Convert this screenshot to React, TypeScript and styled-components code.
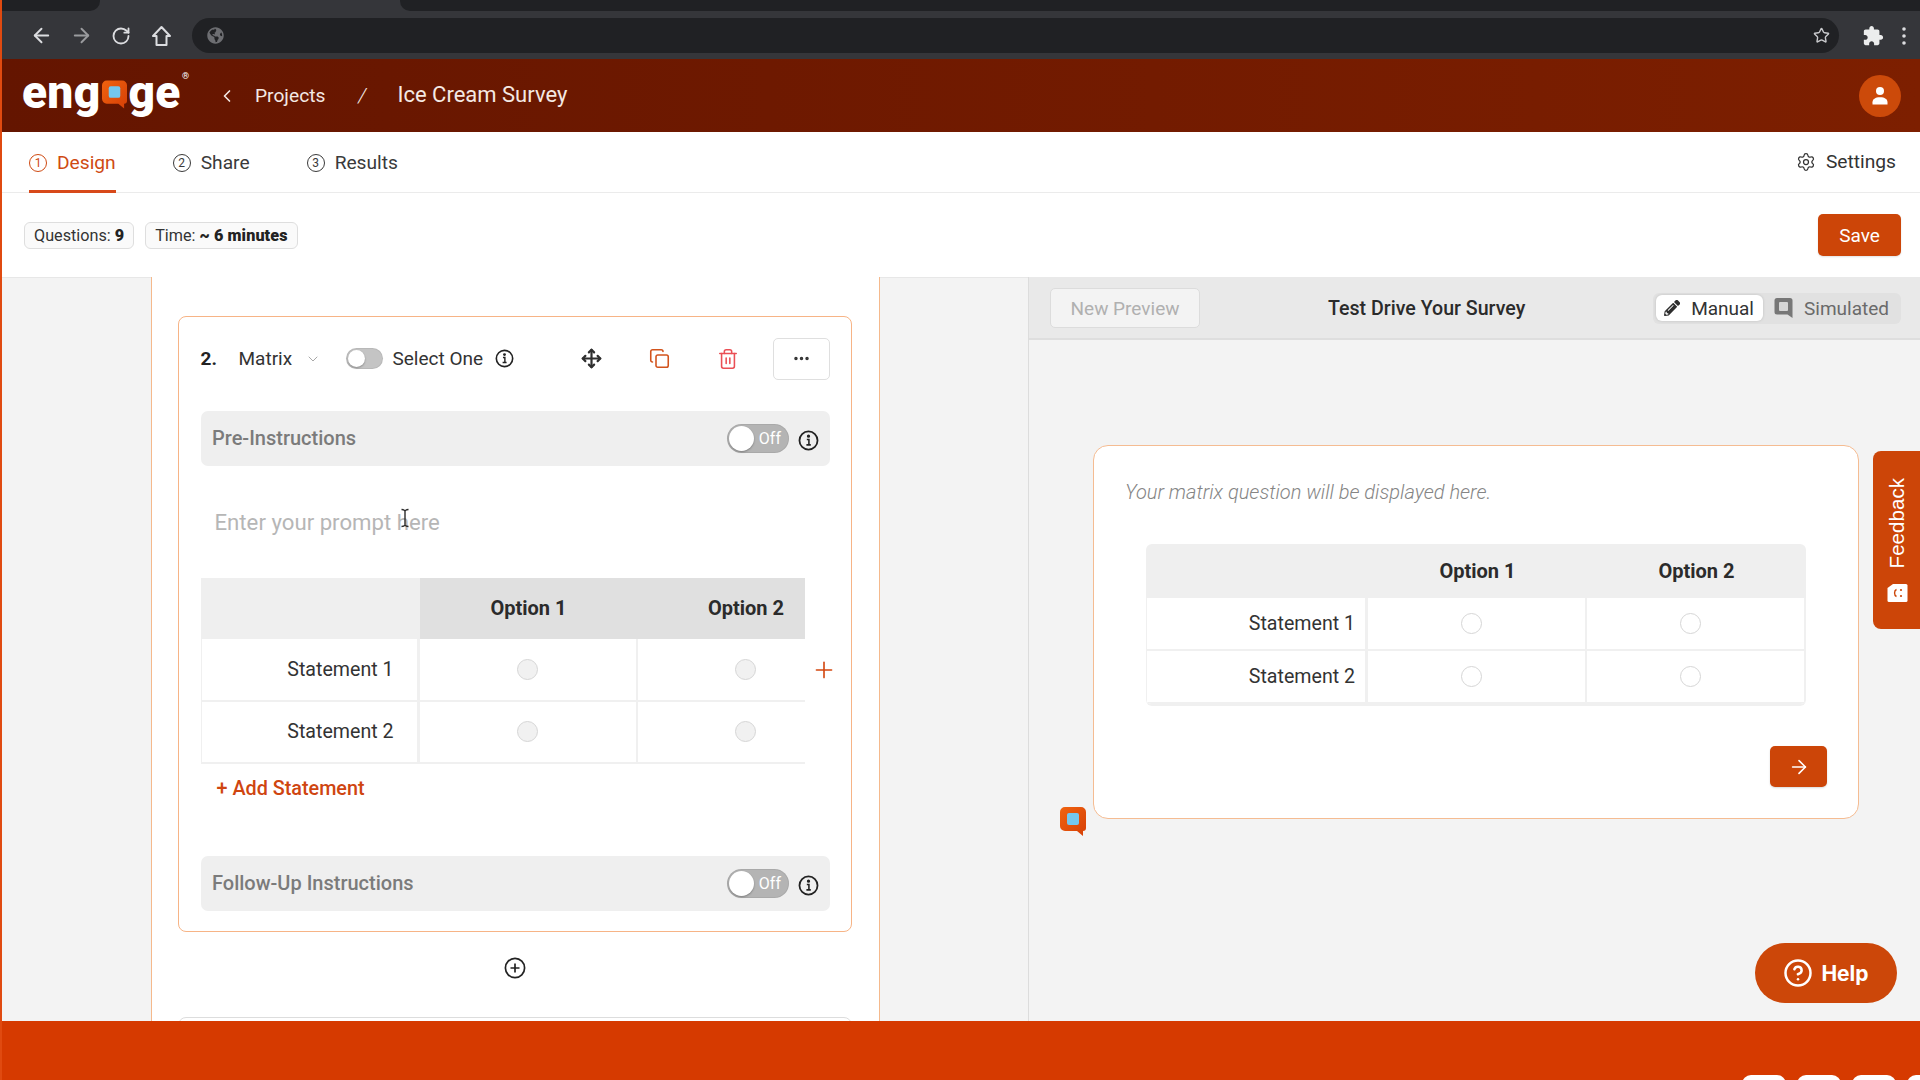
import React from "react";
import styled, { createGlobalStyle } from "styled-components";
import { ArrowLeft, ArrowRight, ChevronDown, ChevronLeft, CircleHelp, Copy, Ellipsis, Move, Plus, RotateCw, Settings, Star, Trash2 } from "lucide-react";
import { FaGlobeAmericas, FaPencilAlt } from "react-icons/fa";

const Global = createGlobalStyle`
  html, body { margin: 0; padding: 0; width: 1920px; height: 1080px; overflow: hidden; background: #fff; }
  body { font-family: Roboto, "Liberation Sans", sans-serif; color: #2b2b2b; }
  * { box-sizing: border-box; }
`;

const Page = styled.div`
  position: relative; width: 1920px; height: 1080px; display: flex; flex-direction: column;
  overflow: hidden; border-left: 2px solid #e04a10;
`;

/* browser chrome */
const ChromeBar = styled.div`height: 59px; background: #35363a; display: flex; flex-direction: column; flex: none;`;
const TabStrip = styled.div`height: 11px; display: flex; gap: 300px;`;
const DarkTab = styled.div<{ $grow?: boolean; $side: "l" | "r" }>`
  background: #202124; width: ${p => (p.$grow ? "auto" : "98px")}; flex: ${p => (p.$grow ? 1 : "none")};
  border-bottom-${p => (p.$side === "l" ? "left" : "right")}-radius: 10px;
`;
const Toolbar = styled.div`height: 48px; display: flex; align-items: center; padding: 1px 0 0 19px;`;
const ChromeBtn = styled.div<{ $dim?: boolean; $w?: number; $ml?: number }>`
  width: ${p => p.$w ?? 40}px; margin-left: ${p => p.$ml ?? 0}px; display: flex; justify-content: center; align-items: center;
  color: ${p => (p.$dim ? "#9a9b9e" : "#dcdde0")};
`;
const Omnibox = styled.div`
  width: 1647px; height: 35px; margin-left: 11px; background: #202124; border-radius: 18px;
  display: flex; align-items: center; justify-content: space-between; padding: 0 9px 0 15px; color: #6d6e72;
`;
const StarIcon = styled(Star)`color: #c8c9cc;`;

/* app header */
const Header = styled.header`
  height: 73px; flex: none; display: flex; align-items: center; padding: 0 19px 0 20px; color: #f4e9e4;
  background: linear-gradient(90deg, #641500 0%, #7d1f00 100%);
`;
const Logo = styled.div`
  width: 168px; display: flex; align-items: center; position: relative; color: #fff;
  font-family: Roboto, sans-serif; font-weight: 900; font-size: 46px; line-height: 1;
  letter-spacing: 0.3px; height: 44px; padding-bottom: 8px;
`;
const LogoBubble = styled.svg`width: 25px; height: 29px; margin: 6px 1px 0 2px; flex: none;`;
const Registered = styled.span`
  position: absolute; top: -2px; right: 1px; font-size: 9px; font-weight: 400; letter-spacing: 0;
`;
const BackChevron = styled(ChevronLeft)`margin-left: 27px; color: #f4e9e4;`;
const Crumb = styled.span`font-size: 19.2px; margin-left: 18px;`;
const Slash = styled.span`font-size: 21px; font-style: italic; margin-left: 33px; font-weight: 300;`;
const Current = styled.span`font-size: 22px; margin-left: 31px; padding-bottom: 2px;`;
const Avatar = styled.div`
  margin-left: auto; width: 42px; height: 42px; border-radius: 50%; background: #cc4a0a;
  display: flex; align-items: center; justify-content: center;
`;

/* tabs */
const TabRow = styled.nav`
  height: 61px; flex: none; display: flex; align-items: stretch; padding: 0 24px 0 27px; border-bottom: 1px solid #ebebeb;
`;
const Tab = styled.div<{ $active?: boolean }>`
  display: flex; align-items: center; gap: 10px; font-size: 19.2px; margin-right: 57px; margin-bottom: -1px; padding-top: 3px;
  color: ${p => (p.$active ? "#cf4a12" : "#3a3a3a")};
  border-bottom: 3px solid ${p => (p.$active ? "#d8491a" : "transparent")};
`;
const StepNo = styled.span`
  width: 18px; height: 18px; border: 1.4px solid currentColor; border-radius: 50%; font-size: 12px;
  display: flex; align-items: center; justify-content: center; line-height: 1;
`;
const SettingsLink = styled.div`
  margin-left: auto; display: flex; align-items: center; gap: 10px; font-size: 19.2px; color: #333; padding-bottom: 1px;
`;

/* sub bar */
const SubBar = styled.div`
  height: 84px; flex: none; display: flex; align-items: center; gap: 11px; padding: 0 19px 0 22px;
`;
const Pill = styled.div`
  height: 27px; display: flex; align-items: center; padding: 0 9px; gap: 4px; font-size: 16.2px; color: #333;
  background: #fafafa; border: 1.5px solid #dedede; border-radius: 6px;
  b { font-weight: 900; color: #222; letter-spacing: 0.1px; }
`;
const SaveBtn = styled.button`
  margin-left: auto; width: 83px; height: 42px; border: 0; border-radius: 5px; background: #cc4508; color: #fff;
  font: 400 19px Roboto, sans-serif; box-shadow: 0 1px 2px rgba(0,0,0,.12);
`;

/* main */
const Main = styled.main`flex: 1; min-height: 0; display: flex; background: #f3f3f3; position: relative; box-shadow: inset 0 1px 0 #e7e7e7;`;
const LeftPane = styled.section`
  width: 1027px; flex: none; padding-left: 149px; border-right: 1px solid #dcdcdc; overflow: hidden;
`;
const Panel = styled.div`
  width: 729px; height: 100%; background: #fff; border-left: 1px solid #f5b98c; border-right: 1px solid #f5b98c;
  padding: 39px 27px 0 26px; overflow: hidden;
`;
const Card = styled.div<{ $muted?: boolean }>`
  border: 1.5px solid ${p => (p.$muted ? "#dddddd" : "#f7b486")}; border-radius: 8px; padding: 20.5px 21px 20.5px 21.5px;
  background: #fff; height: ${p => (p.$muted ? "60px" : "616px")};
`;
const QuestionRow = styled.div`height: 42px; display: flex; align-items: center; font-size: 19px;`;
const QNum = styled.b`font-size: 19px; font-weight: 700; width: 38px; color: #222;`;
const QType = styled.span`width: 66px; color: #333;`;
const Chevron = styled(ChevronDown)`color: #a8a8a8; margin-right: 25px;`;
const Switch = styled.div<{ $big?: boolean }>`
  position: relative; flex: none; width: ${p => (p.$big ? 62 : 37)}px; height: ${p => (p.$big ? 29 : 21)}px;
  border-radius: 15px; background: ${p => (p.$big ? "#b4b4b4" : "#c4c4c4")}; color: #fff; font-size: 16px; font-weight: 400;
  display: flex; align-items: center; justify-content: flex-end; padding-right: 8px;
  box-shadow: inset 0 0 0 1px rgba(0,0,0,.06);
  &::before {
    content: ""; position: absolute; left: 2px; top: 2px; width: ${p => (p.$big ? 25 : 17)}px; height: ${p => (p.$big ? 25 : 17)}px;
    border-radius: 50%; background: #fff; box-shadow: 0 1px 2px rgba(0,0,0,.3);
  }
`;
const SelectLabel = styled.span`margin-left: 10px; width: 102px; color: #333;`;
const InfoSvg = styled.svg<{ $s?: number }>`width: ${p => p.$s ?? 19}px; height: ${p => p.$s ?? 19}px; flex: none;`;
const IconSlot = styled.div<{ $x: number; $c: string }>`
  margin-left: ${p => p.$x}px; width: 22px; display: flex; justify-content: center; color: ${p => p.$c};
`;
const MoreBtn = styled.div`
  margin-left: auto; width: 57px; height: 42px; border: 1.5px solid #dfdfdf; border-radius: 5px;
  display: flex; align-items: center; justify-content: center; color: #333;
`;
const InstructionBar = styled.div<{ $mt?: number }>`
  height: 55px; margin-top: ${p => p.$mt ?? 0}px; background: #efefef; border-radius: 7px; display: flex; align-items: center;
  padding: 0 11px 0 11.5px; font-size: 20px; font-weight: 500; color: #7b7b7b;
  span { flex: 1; }
  svg { margin: 4px 0 0 9px; }
`;
const Prompt = styled.div`
  height: 114px; display: flex; align-items: center; padding: 0 0 2px 14px; font-size: 22.2px; color: #b6b6b6;
`;
const MatrixWrap = styled.div`position: relative; margin-top: -2px;`;
const Clip = styled.div`width: 604px; overflow: hidden;`;
const Grid = styled.div<{ $cols: string; $rows: string; $w: number }>`
  display: grid; width: ${p => p.$w}px; grid-template-columns: ${p => p.$cols}; grid-template-rows: ${p => p.$rows};
`;
const HeadCell = styled.div<{ $bg: string }>`
  background: ${p => p.$bg}; display: flex; align-items: center; justify-content: center; font-size: 20px; font-weight: 700;
  color: #2b2b2b; padding-bottom: 1px;
`;
const LabelCell = styled.div<{ $pad: number }>`
  display: flex; align-items: center; justify-content: flex-end; padding-right: ${p => p.$pad}px; font-size: 19.6px; color: #333;
  border: solid #f0f0f0; border-width: 0 3px 2px 1px; background: #fff;
`;
const RadioCell = styled.div<{ $shift?: number }>`
  display: flex; align-items: center; justify-content: center; padding-right: ${p => p.$shift ?? 0}px;
  border: solid #f0f0f0; border-width: 0 2px 2px 0; background: #fff;
`;
const Radio = styled.div<{ $fill?: boolean }>`
  width: 21px; height: 21px; border-radius: 50%; border: 1.5px solid #d6d6d6; background: ${p => (p.$fill ? "#f1f1f1" : "#fff")};
`;
const AddColumn = styled(Plus)`position: absolute; left: 610px; top: 79px; color: #d3470f;`;
const AddStatement = styled.div`
  height: 50px; display: flex; align-items: center; padding-left: 16px; font-size: 19.8px; font-weight: 500; color: #cf4510;
`;
const AddCircle = styled.div`height: 85px; padding-bottom: 13px; display: flex; align-items: center; justify-content: center;`;

/* right */
const RightPane = styled.section`flex: 1; min-width: 0; display: flex; flex-direction: column;`;
const PreviewBar = styled.div`
  height: 63px; flex: none; display: flex; align-items: center; padding: 1px 19px 0 21px; background: #e9e9e9; border-bottom: 2px solid #dedede;
`;
const NewPreview = styled.button`
  width: 150px; height: 40px; border: 1.5px solid #dcdcdc; border-radius: 5px; background: #f3f3f3; color: #b0b0b0;
  font: 400 19px Roboto, sans-serif;
`;
const PreviewTitle = styled.div`margin-left: 128px; font-size: 19.6px; font-weight: 500; color: #2b2b2b;`;
const Segment = styled.div`
  margin-left: auto; height: 31px; width: 248px; border-radius: 6px; background: #e1e1e1; display: flex; align-items: center; padding: 0 3px;
`;
const SegItem = styled.div<{ $active?: boolean }>`
  height: 26px; display: flex; align-items: center; gap: 11px; padding: 0 9px 0 ${p => (p.$active ? 8 : 11)}px; font-size: 19px; border-radius: 6px;
  background: ${p => (p.$active ? "#fff" : "transparent")}; color: ${p => (p.$active ? "#333" : "#6a6a6a")};
  width: ${p => (p.$active ? "107px" : "auto")}; white-space: nowrap;
  box-shadow: ${p => (p.$active ? "0 0 3px rgba(0,0,0,.15)" : "none")};
`;
const PreviewCard = styled.div`
  width: 766px; height: 374px; margin: 105px 0 0 64px; background: #fff; border: 1.5px solid #f5bc92; border-radius: 15px;
  display: flex; flex-direction: column; padding: 34px 31px 0 31px;
`;
const Hint = styled.div`font-size: 20px; font-style: italic; color: #858585; font-weight: 300; line-height: 24px;`;
const PreviewTable = styled.div`
  margin: 40px 0 0 21px; width: 660px; border-radius: 6px; overflow: hidden; border-bottom: 2px solid #f0f0f0;
`;
const NextBtn = styled.div`
  align-self: flex-end; margin-top: 40px; width: 57px; height: 41px; background: #cc4508; border-radius: 5px; color: #fff;
  display: flex; align-items: center; justify-content: center; box-shadow: 0 1px 2px rgba(0,0,0,.15);
`;
const FeedbackTab = styled.div`
  position: absolute; right: 0; top: 174px; width: 47px; height: 178px; background: #cc4508; border-radius: 8px 0 0 8px; color: #fff;
  display: flex; flex-direction: column; align-items: center; padding: 27px 0 0 2px; gap: 15px;
  font-family: "Liberation Sans", sans-serif; font-size: 20.6px;
  span { writing-mode: vertical-rl; transform: rotate(180deg); line-height: 1; }
`;
const ChatLogo = styled.svg`position: absolute; left: 1058px; top: 530px; width: 26px; height: 29px;`;
const HelpBtn = styled.div`
  position: absolute; right: 23px; bottom: 18px; width: 142px; height: 60px; border-radius: 30px; background: #cc4709; color: #fff;
  display: flex; align-items: center; justify-content: center; gap: 8px; font-family: Inter, sans-serif; font-weight: 700; font-size: 21px;
`;
const CursorMark = styled.svg`position: absolute; left: 398px; top: 231px; width: 10px; height: 20px;`;
const Band = styled.footer`
  height: 59px; flex: none; margin-left: -2px; background: #d63a00; display: flex; gap: 11px; padding: 54px 0 0 1742px; overflow: hidden;
`;
const BandKey = styled.div`width: 44px; height: 20px; flex: none; border-radius: 9px; background: #fff;`;

const Info = ({ s }: { s?: number }) => (
  <InfoSvg $s={s} viewBox="0 0 20 20" fill="none" stroke="#222" strokeWidth="1.7">
    <circle cx="10" cy="10" r="8.6" />
    <path d="M8.4 9h2v5M8 14.2h4.2" strokeWidth="1.5" />
    <circle cx="10" cy="5.9" r="0.7" fill="#222" />
  </InfoSvg>
);

const Bubble = () => (
  <>
    <defs>
      <linearGradient id="bub" x1="0" y1="0" x2="1" y2="1">
        <stop offset="0" stopColor="#f0630f" />
        <stop offset="1" stopColor="#d63f06" />
      </linearGradient>
    </defs>
    <path d="M5 0h16a5 5 0 0 1 5 5v16a3 3 0 0 1-3 3v5l-6-5H5a5 5 0 0 1-5-5V5a5 5 0 0 1 5-5z" fill="url(#bub)" />
    <path d="M9 6h8a2 2 0 0 1 2 2v8a2 2 0 0 1-2 2h-8a2 2 0 0 1-2-2V8a2 2 0 0 1 2-2z" fill="#74c7ee" />
  </>
);

const HomeIcon = () => (
  <svg width="21" height="22" viewBox="0 0 21 22" fill="none" stroke="currentColor" strokeWidth="2" strokeLinejoin="round">
    <path d="M10.5 2 2 11h3.5v9h10v-9H19z" />
  </svg>
);

const ExtensionIcon = () => (
  <svg width="22" height="22" viewBox="0 0 24 24" fill="#eceded">
    <path d="M20.5 11H19V7c0-1.100-.9-2-2-2h-4V3.500C13 2.120 11.880 1 10.500 1S8 2.120 8 3.500V5H4c-1.100 0-1.990.9-1.990 2v3.800H3.500c1.490 0 2.700 1.210 2.700 2.700s-1.210 2.700-2.700 2.700H2V20c0 1.100.9 2 2 2h3.800v-1.500c0-1.490 1.210-2.700 2.700-2.700 1.490 0 2.700 1.210 2.700 2.700V22H17c1.100 0 2-.9 2-2v-4h1.500c1.380 0 2.500-1.120 2.500-2.500S21.880 11 20.500 11z" />
  </svg>
);

const UserIcon = () => (
  <svg width="18" height="20" viewBox="0 0 18 20" fill="#fff">
    <circle cx="9" cy="5" r="4" />
    <path d="M1.500 18.500v-2.200c0-3 2.600-5 7.500-5s7.500 2 7.500 5v2.200z" />
  </svg>
);

const SmileTag = () => (
  <svg width="21" height="20" viewBox="0 0 21 20">
    <path d="M6 1h13a1.500 1.500 0 0 1 1.500 1.500v15A1.500 1.500 0 0 1 19 19H2a1.500 1.500 0 0 1-1.500-1.500V5z" fill="#fff" />
    <circle cx="14" cy="7" r="1.100" fill="#cc4508" />
    <circle cx="14" cy="13" r="1.100" fill="#cc4508" />
    <path d="M9.500 6.500c-2.600 1-2.600 6 0 7" fill="none" stroke="#cc4508" strokeWidth="1.400" />
  </svg>
);

const BookIcon = () => (
  <svg width="19" height="22" viewBox="0 0 19 22">
    <path d="M3 1h13a2.500 2.500 0 0 1 2.500 2.500V21l-5-3.500H3A2.500 2.500 0 0 1 .5 15V3.500A2.500 2.500 0 0 1 3 1z" fill="#777" />
    <rect x="5" y="5" width="9" height="9" rx="1" fill="#d6d6d6" />
  </svg>
);

export default function App() {
  return (
    <Page>
      <Global />
      <ChromeBar>
        <TabStrip>
          <DarkTab $side="r" />
          <DarkTab $side="l" $grow />
        </TabStrip>
        <Toolbar>
          <ChromeBtn><ArrowLeft size={23} strokeWidth={2} /></ChromeBtn>
          <ChromeBtn $dim><ArrowRight size={23} strokeWidth={2} /></ChromeBtn>
          <ChromeBtn><RotateCw size={20} strokeWidth={2.2} /></ChromeBtn>
          <ChromeBtn><HomeIcon /></ChromeBtn>
          <Omnibox>
            <FaGlobeAmericas size={17} />
            <StarIcon size={17} strokeWidth={2} />
          </Omnibox>
          <ChromeBtn $w={22} $ml={23}><ExtensionIcon /></ChromeBtn>
          <ChromeBtn $w={6} $ml={17}>
            <svg width="4" height="18" viewBox="0 0 4 18" fill="#dcdde0"><circle cx="2" cy="2" r="1.800" /><circle cx="2" cy="9" r="1.800" /><circle cx="2" cy="16" r="1.800" /></svg>
          </ChromeBtn>
        </Toolbar>
      </ChromeBar>

      <Header>
        <Logo>
          eng
          <LogoBubble viewBox="0 0 26 29"><Bubble /></LogoBubble>
          ge
          <Registered>®</Registered>
        </Logo>
        <BackChevron size={20} strokeWidth={2} />
        <Crumb>Projects</Crumb>
        <Slash>/</Slash>
        <Current>Ice Cream Survey</Current>
        <Avatar><UserIcon /></Avatar>
      </Header>

      <TabRow>
        <Tab $active><StepNo>1</StepNo>Design</Tab>
        <Tab><StepNo>2</StepNo>Share</Tab>
        <Tab><StepNo>3</StepNo>Results</Tab>
        <SettingsLink><Settings size={20} strokeWidth={1.5} />Settings</SettingsLink>
      </TabRow>

      <SubBar>
        <Pill>Questions: <b>9</b></Pill>
        <Pill>Time: <b>~ 6 minutes</b></Pill>
        <SaveBtn>Save</SaveBtn>
      </SubBar>

      <Main>
        <LeftPane>
          <Panel>
            <Card>
              <QuestionRow>
                <QNum>2.</QNum>
                <QType>Matrix</QType>
                <Chevron size={16} strokeWidth={1.5} />
                <Switch />
                <SelectLabel>Select One</SelectLabel>
                <Info />
                <IconSlot $x={67} $c="#2f2f2f"><Move size={21} strokeWidth={2.5} /></IconSlot>
                <IconSlot $x={46} $c="#d2531c"><Copy size={21} strokeWidth={1.8} /></IconSlot>
                <IconSlot $x={46} $c="#ea4f55"><Trash2 size={22} strokeWidth={1.7} /></IconSlot>
                <MoreBtn><Ellipsis size={19} strokeWidth={2.4} /></MoreBtn>
              </QuestionRow>
              <InstructionBar $mt={31}>
                <span>Pre-Instructions</span>
                <Switch $big>Off</Switch>
                <Info s={21} />
              </InstructionBar>
              <Prompt>Enter your prompt here</Prompt>
              <MatrixWrap>
                <Clip>
                  <Grid $w={654} $cols="219px 218px 217px" $rows="61px 63px 62px">
                    <HeadCell $bg="#efefef" />
                    <HeadCell $bg="#e0e0e0">Option 1</HeadCell>
                    <HeadCell $bg="#e0e0e0">Option 2</HeadCell>
                    <LabelCell $pad={23}>Statement 1</LabelCell>
                    <RadioCell><Radio $fill /></RadioCell>
                    <RadioCell><Radio $fill /></RadioCell>
                    <LabelCell $pad={23}>Statement 2</LabelCell>
                    <RadioCell><Radio $fill /></RadioCell>
                    <RadioCell><Radio $fill /></RadioCell>
                  </Grid>
                </Clip>
                <AddColumn size={26} strokeWidth={1.5} />
              </MatrixWrap>
              <AddStatement>+ Add Statement</AddStatement>
              <InstructionBar $mt={42}>
                <span>Follow-Up Instructions</span>
                <Switch $big>Off</Switch>
                <Info s={21} />
              </InstructionBar>
            </Card>
            <AddCircle>
              <svg width="22" height="22" viewBox="0 0 22 22" fill="none" stroke="#222" strokeWidth="1.7">
                <circle cx="11" cy="11" r="9.6" />
                <path d="M11 6.500v9M6.500 11h9" />
              </svg>
            </AddCircle>
            <Card $muted />
          </Panel>
        </LeftPane>

        <RightPane>
          <PreviewBar>
            <NewPreview>New Preview</NewPreview>
            <PreviewTitle>Test Drive Your Survey</PreviewTitle>
            <Segment>
              <SegItem $active><FaPencilAlt size={20} color="#2d2d2d" />Manual</SegItem>
              <SegItem><BookIcon />Simulated</SegItem>
            </Segment>
          </PreviewBar>
          <PreviewCard>
            <Hint>Your matrix question will be displayed here.</Hint>
            <PreviewTable>
              <Grid $w={660} $cols="222px 219px 219px" $rows="54px 53px 53px">
                <HeadCell $bg="#efefef" />
                <HeadCell $bg="#efefef">Option 1</HeadCell>
                <HeadCell $bg="#efefef">Option 2</HeadCell>
                <LabelCell $pad={10}>Statement 1</LabelCell>
                <RadioCell $shift={10}><Radio /></RadioCell>
                <RadioCell $shift={10}><Radio /></RadioCell>
                <LabelCell $pad={10}>Statement 2</LabelCell>
                <RadioCell $shift={10}><Radio /></RadioCell>
                <RadioCell $shift={10}><Radio /></RadioCell>
              </Grid>
            </PreviewTable>
            <NextBtn><ArrowRight size={22} strokeWidth={1.7} /></NextBtn>
          </PreviewCard>
        </RightPane>

        <CursorMark viewBox="0 0 10 20" fill="none" stroke="#2b2b2b" strokeWidth="1.4">
          <path d="M1.500 1.500c2 0 3 .6 3.500 1.500.5-.9 1.500-1.500 3.500-1.500M5 3v14M1.500 18.500c2 0 3-.6 3.500-1.500.5.9 1.500 1.500 3.500 1.500" />
        </CursorMark>
        <ChatLogo viewBox="0 0 26 29"><Bubble /></ChatLogo>
        <FeedbackTab>
          <span>Feedback</span>
          <SmileTag />
        </FeedbackTab>
        <HelpBtn><CircleHelp size={30} strokeWidth={2} />Help</HelpBtn>
      </Main>

      <Band>
        <BandKey /><BandKey /><BandKey /><BandKey />
      </Band>
    </Page>
  );
}
